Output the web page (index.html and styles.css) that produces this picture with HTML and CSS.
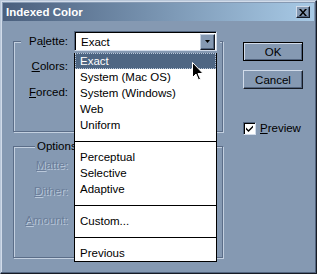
FILE: index.html
```html
<!DOCTYPE html>
<html lang="en">
<head>
    <meta charset="UTF-8">
    <title>Indexed Color</title>
    <link rel="stylesheet" href="styles.css">
</head>
<body>
    <div class="window">
        <div class="titlebar">
            <span class="title">Indexed Color</span>
            <span class="close">
                <svg width="8" height="7" viewBox="0 0 8 7"><path d="M0 0h2l2 2.5L6 0h2L5 3.5 8 7H6L4 4.5 2 7H0l3-3.5z" fill="#000"/></svg>
            </span>
        </div>
        <div class="body">
            <div class="main">
                <fieldset class="group group-palette">
                    <legend class="row legend-row">
                        <span class="label">Pa<u>l</u>ette:</span>
                        <div class="select">
                            <span class="select-value">Exact</span>
                            <span class="select-arrow">
                                <svg width="5" height="3" viewBox="0 0 5 3"><path d="M0 0h5L2.5 3z" fill="#000"/></svg>
                            </span>
                        </div>
                    </legend>
                    <div class="rows">
                        <div class="row"><span class="label"><u>C</u>olors:</span></div>
                        <div class="row"><span class="label"><u>F</u>orced:</span></div>
                    </div>
                </fieldset>
                <fieldset class="group group-options">
                    <legend class="legend-text">Options</legend>
                    <div class="rows">
                        <div class="row disabled"><span class="label"><u>M</u>atte:</span></div>
                        <div class="row disabled"><span class="label"><u>D</u>ither:</span></div>
                        <div class="row disabled row-amount"><span class="label"><u>A</u>mount:</span></div>
                    </div>
                </fieldset>
            </div>
            <div class="side">
                <button class="btn btn-default">OK</button>
                <button class="btn">Cancel</button>
                <label class="check">
                    <span class="check-box">
                        <svg width="9" height="9" viewBox="0 0 9 9"><path d="M1 3.5l2.5 2.5L8 1.5v2L3.5 8 1 5.5z" fill="#000"/></svg>
                    </span>
                    <span><u>P</u>review</span>
                </label>
            </div>
        </div>

        <ul class="menu">
            <li class="item active">Exact</li>
            <li class="item">System (Mac OS)</li>
            <li class="item">System (Windows)</li>
            <li class="item">Web</li>
            <li class="item">Uniform</li>
            <li class="sep"></li>
            <li class="item">Perceptual</li>
            <li class="item">Selective</li>
            <li class="item">Adaptive</li>
            <li class="sep"></li>
            <li class="item">Custom...</li>
            <li class="sep"></li>
            <li class="item">Previous</li>
        </ul>

        <svg class="cursor" width="12" height="19" viewBox="0 0 12 19">
            <path d="M0.5 0.5v15l3.5-3.5 2.5 6 2-1-2.5-5.5h5z" fill="#000" stroke="#fff" stroke-width="1"/>
        </svg>
    </div>
</body>
</html>
```

FILE: styles.css
```css
/* Grundlayout */
body {
    margin: 0;
    font-family: 'Liberation Sans', Arial, sans-serif;
    font-size: 11.5px;
    line-height: 14px;
    color: #000;
    background: #8599b2;
}

.window {
    position: relative;
    width: 317px;
    height: 274px;
    box-sizing: border-box;
    padding: 2px;
    background: #8599b2;
    border-top: 1px solid #b9c7d9;
    border-left: 1px solid #b9c7d9;
    border-right: 1px solid #161b24;
    border-bottom: 1px solid #161b24;
    box-shadow: inset -1px -1px 0 #52647e, inset 1px 1px 0 #d2dcea;
    overflow: hidden;
}

/* Titelleiste */
.titlebar {
    height: 18px;
    display: flex;
    align-items: center;
    justify-content: space-between;
    padding: 0 4px 0 3px;
    background: linear-gradient(to right, #4a5f7d, #a8cae6);
}

.title {
    color: #fff;
    font-weight: bold;
}

.close {
    width: 14px;
    height: 12px;
    box-sizing: border-box;
    display: flex;
    align-items: center;
    justify-content: center;
    background: #8599b2;
    border-top: 1px solid #d2dcea;
    border-left: 1px solid #d2dcea;
    border-right: 1px solid #161b24;
    border-bottom: 1px solid #161b24;
    box-shadow: inset -1px -1px 0 #52647e;
}

/* Inhalt */
.body {
    display: flex;
    padding: 10px 0 0 10px;
}

.main {
    width: 211px;
}

.group {
    margin: 0;
    padding: 0;
    width: 210px;
    box-sizing: border-box;
    border: 1px solid #5b6d88;
    box-shadow: inset 1px 1px 0 #c3d0e0, 1px 1px 0 #c3d0e0;
}

.group legend {
    background: #8599b2;
}

.legend-row {
    margin-left: 7px;
    padding: 0 3px;
    display: flex;
    align-items: center;
}

.legend-text {
    margin-left: 21px;
    padding: 0 2px;
}

.rows {
    display: flex;
    flex-direction: column;
    gap: 6px;
    padding-left: 10px;
}

.group-palette .rows {
    padding-top: 5px;
    padding-bottom: 29px;
}

.group-options {
    margin-top: 7px;
}

.group-options .rows {
    padding-top: 2px;
    padding-bottom: 27px;
}

.row {
    height: 20px;
    display: flex;
    align-items: center;
}

.row-amount {
    margin-top: 3px;
}

.label {
    width: 44px;
    margin-right: 6px;
    text-align: right;
    white-space: nowrap;
}

.disabled .label {
    color: #6a7d99;
    text-shadow: 1px 1px 0 #bac8da;
}

/* Auswahlfeld */
.select {
    width: 143px;
    height: 20px;
    box-sizing: border-box;
    display: flex;
    align-items: center;
    justify-content: space-between;
    background: #fff;
    border-top: 1px solid #52647e;
    border-left: 1px solid #52647e;
    border-right: 1px solid #d2dcea;
    border-bottom: 1px solid #d2dcea;
    box-shadow: inset 1px 1px 0 #000;
    padding: 1px 1px 0 6px;
}

.select-arrow {
    width: 15px;
    height: 16px;
    box-sizing: border-box;
    display: flex;
    align-items: center;
    justify-content: center;
    background: #8599b2;
    border-top: 1px solid #c3d0e0;
    border-left: 1px solid #c3d0e0;
    border-right: 1px solid #161b24;
    border-bottom: 1px solid #161b24;
    box-shadow: inset -1px -1px 0 #52647e;
}

/* Rechte Spalte */
.side {
    display: flex;
    flex-direction: column;
    align-items: flex-start;
    margin-left: 19px;
    padding-top: 11px;
}

.btn {
    width: 60px;
    height: 19px;
    padding: 0;
    font: inherit;
    color: #000;
    background: #8599b2;
    border-top: 1px solid #d2dcea;
    border-left: 1px solid #d2dcea;
    border-right: 1px solid #161b24;
    border-bottom: 1px solid #161b24;
    box-shadow: inset -1px -1px 0 #52647e;
    margin-bottom: 9px;
}

.btn-default {
    border: 1px solid #000;
    box-shadow: inset 1px 1px 0 #d2dcea, inset -1px -1px 0 #52647e;
}

.check {
    display: flex;
    align-items: center;
    gap: 4px;
    margin-top: 23px;
}

.check-box {
    width: 13px;
    height: 13px;
    box-sizing: border-box;
    display: flex;
    align-items: center;
    justify-content: center;
    background: #fff;
    border-top: 1px solid #52647e;
    border-left: 1px solid #52647e;
    border-right: 1px solid #d2dcea;
    border-bottom: 1px solid #d2dcea;
    box-shadow: inset 1px 1px 0 #000;
}

/* Aufgeklappte Liste */
.menu {
    position: absolute;
    left: 73px;
    top: 52px;
    width: 143px;
    margin: 0;
    padding: 0;
    list-style: none;
    box-sizing: border-box;
    background: #fff;
    border: 1px solid #000;
    border-top: none;
}

.item {
    height: 16px;
    line-height: 16px;
    padding-left: 5px;
    box-sizing: border-box;
}

.item.active {
    background: #4e6683;
    color: #fff;
    outline: 1px dotted #b9c7d9;
    outline-offset: -1px;
}

.sep {
    height: 16px;
    display: flex;
    align-items: center;
}

.sep::after {
    content: "";
    flex: 1;
    height: 1px;
    background: #000;
}

.cursor {
    position: absolute;
    left: 191px;
    top: 61px;
}
```
